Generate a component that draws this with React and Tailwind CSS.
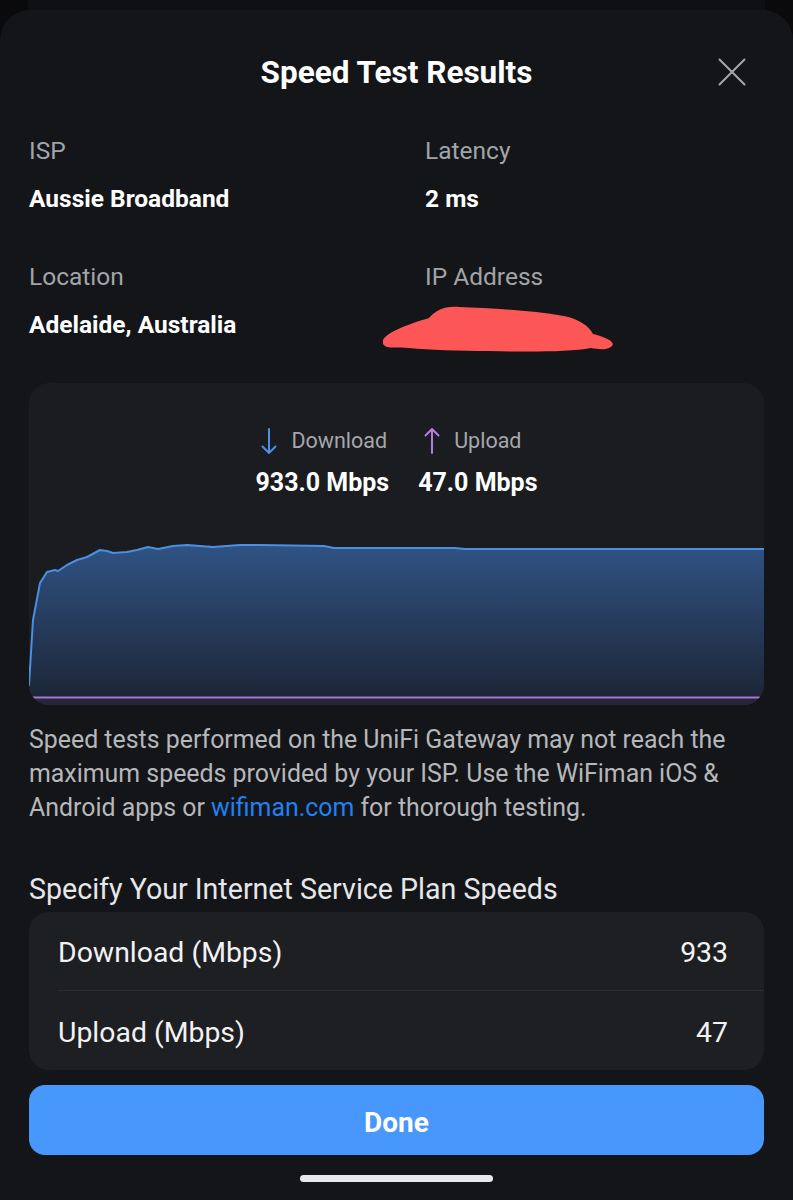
import React from "react";

const chartPts = [
  [0, 155], [4, 90], [11, 53], [18, 42], [26, 40], [29, 41], [38, 35], [48, 30], [58, 27],
  [71, 20], [78, 21], [84, 23], [98, 22], [108, 20], [119, 17], [129, 19], [144, 16],
  [158, 15], [184, 17], [211, 15], [231, 15], [295, 16], [305, 18], [426, 18], [436, 19],
  [527, 19], [629, 19], [735, 19],
];

function Chart() {
  const line = chartPts.map((p, i) => `${i ? "L" : "M"}${p[0]} ${p[1]}`).join(" ");
  const area = `${line} L735 175 L0 175 Z`;
  return (
    <svg width="735" height="175" viewBox="0 0 735 175" className="block">
      <defs>
        <linearGradient id="fillg" x1="0" y1="0" x2="0" y2="1">
          <stop offset="0%" stopColor="#2f5384" />
          <stop offset="100%" stopColor="#1c2333" />
        </linearGradient>
      </defs>
      <path d={area} fill="url(#fillg)" />
      <path d={line} fill="none" stroke="#4b8fe2" strokeWidth="2" strokeLinejoin="round" strokeLinecap="round" />
      <rect x="0" y="168" width="735" height="7" fill="#25263a" />
      <path d="M4 167.5 L730 167.5" stroke="#a576d6" strokeWidth="2" strokeLinecap="round" />
    </svg>
  );
}

function Scribble() {
  return (
    <svg
      width="240"
      height="48"
      viewBox="0 0 240 48"
      className="absolute left-[-46px] top-[-5px]"
    >
      <path
        d="M4 36 C8 28 30 20 50 14 C58 6 64 2 80 3 C110 4 150 6 185 12 C200 15 210 22 214 30 C222 32 232 35 234 40 C232 46 222 46 212 44 C190 48 150 48 110 47 C80 47 50 46 30 44 C20 42 8 46 4 40 Z"
        fill="#fc5656"
      />
      <path d="M18 38 C30 30 60 30 80 36" stroke="#fc5656" strokeWidth="8" fill="none" strokeLinecap="round" />
    </svg>
  );
}

export default function App() {
  return (
    <div
      className="w-[793px] min-h-[1200px] bg-[#0a0a0c] flex flex-col"
      style={{ fontFamily: "Roboto, 'Noto Sans', sans-serif" }}
    >
      <div className="h-[10px] mx-[28px] bg-[#0f1012]" />
      <div className="flex-1 bg-[#141518] rounded-t-[30px] pt-[45px] px-[29px] flex flex-col">
        <div className="relative h-[36px] flex items-center justify-center">
          <h1 className="text-[31.5px] font-bold text-white leading-[36px]">Speed Test Results</h1>
          <svg
            width="30"
            height="30"
            viewBox="0 0 30 30"
            className="absolute right-[17px] top-[2px]"
          >
            <path d="M2.5 2.5 L27.5 27.5 M27.5 2.5 L2.5 27.5" stroke="#a5a7ab" strokeWidth="2" strokeLinecap="round" />
          </svg>
        </div>

        <div className="mt-[44px] grid grid-cols-[396px_1fr]">
          <div>
            <div className="text-[24.5px] leading-[32px] text-[#a1a4a9]">ISP</div>
            <div className="mt-[16px] text-[24.5px] leading-[32px] font-bold text-white">Aussie Broadband</div>
          </div>
          <div>
            <div className="text-[24.5px] leading-[32px] text-[#a1a4a9]">Latency</div>
            <div className="mt-[16px] text-[24.5px] leading-[32px] font-bold text-white">2 ms</div>
          </div>
          <div className="mt-[46px]">
            <div className="text-[24.5px] leading-[32px] text-[#a1a4a9]">Location</div>
            <div className="mt-[16px] text-[24.5px] leading-[32px] font-bold text-white">Adelaide, Australia</div>
          </div>
          <div className="mt-[46px]">
            <div className="text-[24.5px] leading-[32px] text-[#a1a4a9]">IP Address</div>
            <div className="mt-[16px] h-[32px] relative">
              <Scribble />
            </div>
          </div>
        </div>

        <div className="mt-[42px] h-[322px] rounded-[20px] bg-[#1b1c20] overflow-hidden flex flex-col">
          <div className="pt-[43px] flex justify-center gap-[29px]">
            <div className="flex flex-col items-start">
              <div className="flex items-center gap-[14px] h-[30px] pl-[6px]">
                <svg width="16" height="28" viewBox="0 0 16 28">
                  <path d="M8 2 L8 26 M1.5 19.5 L8 26 L14.5 19.5" stroke="#4a90e4" strokeWidth="2" fill="none" strokeLinecap="round" strokeLinejoin="round" />
                </svg>
                <span className="text-[21.5px] text-[#a4a7ac]">Download</span>
              </div>
              <div className="mt-[12px] text-[25px] leading-[30px] font-bold text-white">933.0 Mbps</div>
            </div>
            <div className="flex flex-col items-start">
              <div className="flex items-center gap-[14px] h-[30px] pl-[6px]">
                <svg width="16" height="28" viewBox="0 0 16 28">
                  <path d="M8 26 L8 2 M1.5 8.5 L8 2 L14.5 8.5" stroke="#b17fdf" strokeWidth="2" fill="none" strokeLinecap="round" strokeLinejoin="round" />
                </svg>
                <span className="text-[21.5px] text-[#a4a7ac]">Upload</span>
              </div>
              <div className="mt-[12px] text-[25px] leading-[30px] font-bold text-white">47.0 Mbps</div>
            </div>
          </div>
          <div className="mt-auto">
            <Chart />
          </div>
        </div>

        <p className="mt-[18px] text-[24.9px] leading-[34px] text-[#b5b7bb]">
          Speed tests performed on the UniFi Gateway may not reach the maximum speeds provided by your ISP. Use the WiFiman iOS &amp; Android apps or{" "}
          <span className="text-[#2180f2]">wifiman.com</span> for thorough testing.
        </p>

        <h2 className="mt-[47px] text-[28.6px] leading-[34px] text-[#e6e7e9]">Specify Your Internet Service Plan Speeds</h2>

        <div className="mt-[6px] rounded-[20px] bg-[#1e1f23] pl-[29px]">
          <div className="h-[79px] pt-[5px] flex items-center justify-between pr-[36px] border-b border-[#2c2d31]">
            <span className="text-[28.4px] text-[#f2f2f3]">Download (Mbps)</span>
            <span className="text-[28.4px] text-[#f2f2f3]">933</span>
          </div>
          <div className="h-[79px] pt-[5px] flex items-center justify-between pr-[36px]">
            <span className="text-[28.4px] text-[#f2f2f3]">Upload (Mbps)</span>
            <span className="text-[28.4px] text-[#f2f2f3]">47</span>
          </div>
        </div>

        <button className="mt-[15px] h-[70px] pt-[5px] rounded-[16px] bg-[#4897fc] text-white text-[28px] font-bold flex items-center justify-center">
          Done
        </button>

        <div className="mt-[20px] mx-auto w-[193px] h-[7px] rounded-full bg-[#e8e8ea]" />
      </div>
    </div>
  );
}
